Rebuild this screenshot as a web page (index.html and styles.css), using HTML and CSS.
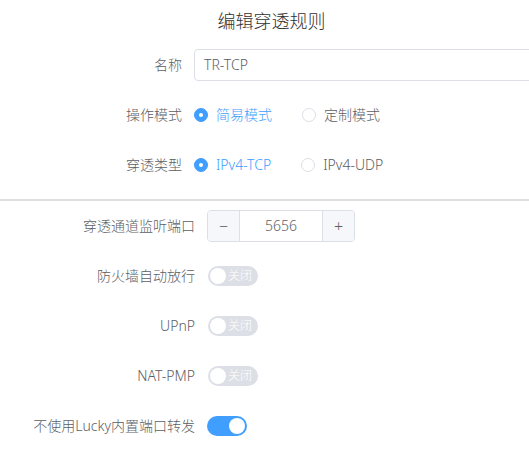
FILE: index.html
```html
<!DOCTYPE html>
<html lang="zh-CN">
<head>
<meta charset="utf-8">
<title>编辑穿透规则</title>
<link rel="stylesheet" href="styles.css">
</head>
<body>
<div class="dialog">
  <div class="title">编辑穿透规则</div>
  <div class="form form-top">
    <div class="item">
      <label class="label">名称</label>
      <div class="input">TR-TCP</div>
    </div>
    <div class="item">
      <label class="label">操作模式</label>
      <div class="radio-group">
        <span class="radio checked"><span class="dot"></span><span class="rtext">简易模式</span></span>
        <span class="radio"><span class="dot"></span><span class="rtext">定制模式</span></span>
      </div>
    </div>
    <div class="item">
      <label class="label">穿透类型</label>
      <div class="radio-group">
        <span class="radio checked"><span class="dot"></span><span class="rtext">IPv4-TCP</span></span>
        <span class="radio"><span class="dot"></span><span class="rtext">IPv4-UDP</span></span>
      </div>
    </div>
  </div>
  <div class="divider"></div>
  <div class="form form-bottom">
    <div class="item">
      <label class="label">穿透通道监听端口</label>
      <div class="number">
        <span class="btn">−</span>
        <span class="value">5656</span>
        <span class="btn">+</span>
      </div>
    </div>
    <div class="item">
      <label class="label">防火墙自动放行</label>
      <span class="switch off"><span class="knob"></span><span class="stext">关闭</span></span>
    </div>
    <div class="item">
      <label class="label">UPnP</label>
      <span class="switch off"><span class="knob"></span><span class="stext">关闭</span></span>
    </div>
    <div class="item">
      <label class="label">NAT-PMP</label>
      <span class="switch off"><span class="knob"></span><span class="stext">关闭</span></span>
    </div>
    <div class="item">
      <label class="label">不使用Lucky内置端口转发</label>
      <span class="switch on"><span class="knob"></span></span>
    </div>
  </div>
</div>
</body>
</html>
```
FILE: styles.css
```css
html, body {
  margin: 0;
  padding: 0;
  background: #ffffff;
}
body {
  width: 529px;
  height: 456px;
  overflow: hidden;
  font-family: "Noto Sans", "Noto Sans CJK SC", sans-serif;
  font-size: 14px;
  font-weight: 300;
  color: #5c5e63;
}
.dialog {
  display: flex;
  flex-direction: column;
}
.title {
  padding: 9px 0 0 14px;
  height: 24px;
  line-height: 24px;
  font-size: 18px;
  color: #303133;
  text-align: center;
  margin-bottom: 16px;
}
.form {
  display: flex;
  flex-direction: column;
  gap: 18px;
}
.form-top {
  padding-bottom: 18px;
}
.form-bottom {
  padding-top: 9px;
}
.item {
  display: flex;
  align-items: center;
  height: 32px;
}
.label {
  flex: none;
  box-sizing: border-box;
  text-align: right;
  padding-right: 12px;
  line-height: 32px;
  white-space: nowrap;
}
.form-top .label { width: 194px; }
.form-bottom .label { width: 207px; padding-right: 12px; }
.input {
  flex: none;
  width: 360px;
  height: 32px;
  box-sizing: border-box;
  border: 1px solid #dcdfe6;
  border-radius: 4px;
  padding: 0 9px;
  line-height: 30px;
}
.radio-group {
  display: flex;
  align-items: center;
}
.radio {
  display: inline-flex;
  align-items: center;
  margin-right: 30px;
}
.radio:last-child { margin-right: 0; }
.dot {
  width: 14px;
  height: 14px;
  box-sizing: border-box;
  border: 1px solid #dcdfe6;
  border-radius: 50%;
  background: #fff;
  position: relative;
}
.radio.checked .dot {
  border-color: #409eff;
  background: #409eff;
}
.radio.checked .dot::after {
  content: "";
  position: absolute;
  left: 50%;
  top: 50%;
  width: 4px;
  height: 4px;
  margin: -2px 0 0 -2px;
  border-radius: 50%;
  background: #fff;
}
.radio.checked .rtext { color: #409eff; }
.rtext {
  padding-left: 8px;
  line-height: 20px;
}
.divider {
  height: 2px;
  background: #dedede;
}
.number {
  display: flex;
  width: 148px;
  height: 32px;
  box-sizing: border-box;
  border: 1px solid #dcdfe6;
  border-radius: 4px;
  overflow: hidden;
}
.btn {
  width: 31px;
  flex: none;
  display: flex;
  align-items: center;
  justify-content: center;
  background: #f5f7fa;
  font-size: 16px;
}
.btn:first-child { border-right: 1px solid #dcdfe6; }
.btn:last-child { border-left: 1px solid #dcdfe6; }
.value {
  flex: 1;
  text-align: center;
  line-height: 30px;
}
.switch {
  position: relative;
  display: inline-flex;
  align-items: center;
  height: 20px;
  border-radius: 10px;
  box-sizing: border-box;
}
.switch.off {
  width: 50px;
  background: #dcdfe6;
  margin-left: 1px;
}
.switch.on {
  width: 40px;
  background: #409eff;
}
.knob {
  position: absolute;
  top: 2px;
  width: 16px;
  height: 16px;
  border-radius: 50%;
  background: #fff;
}
.switch.off .knob { left: 2px; }
.switch.on .knob { right: 2px; }
.stext {
  position: absolute;
  left: 20px;
  top: 0;
  line-height: 20px;
  font-size: 12px;
  color: #fff;
}
```
